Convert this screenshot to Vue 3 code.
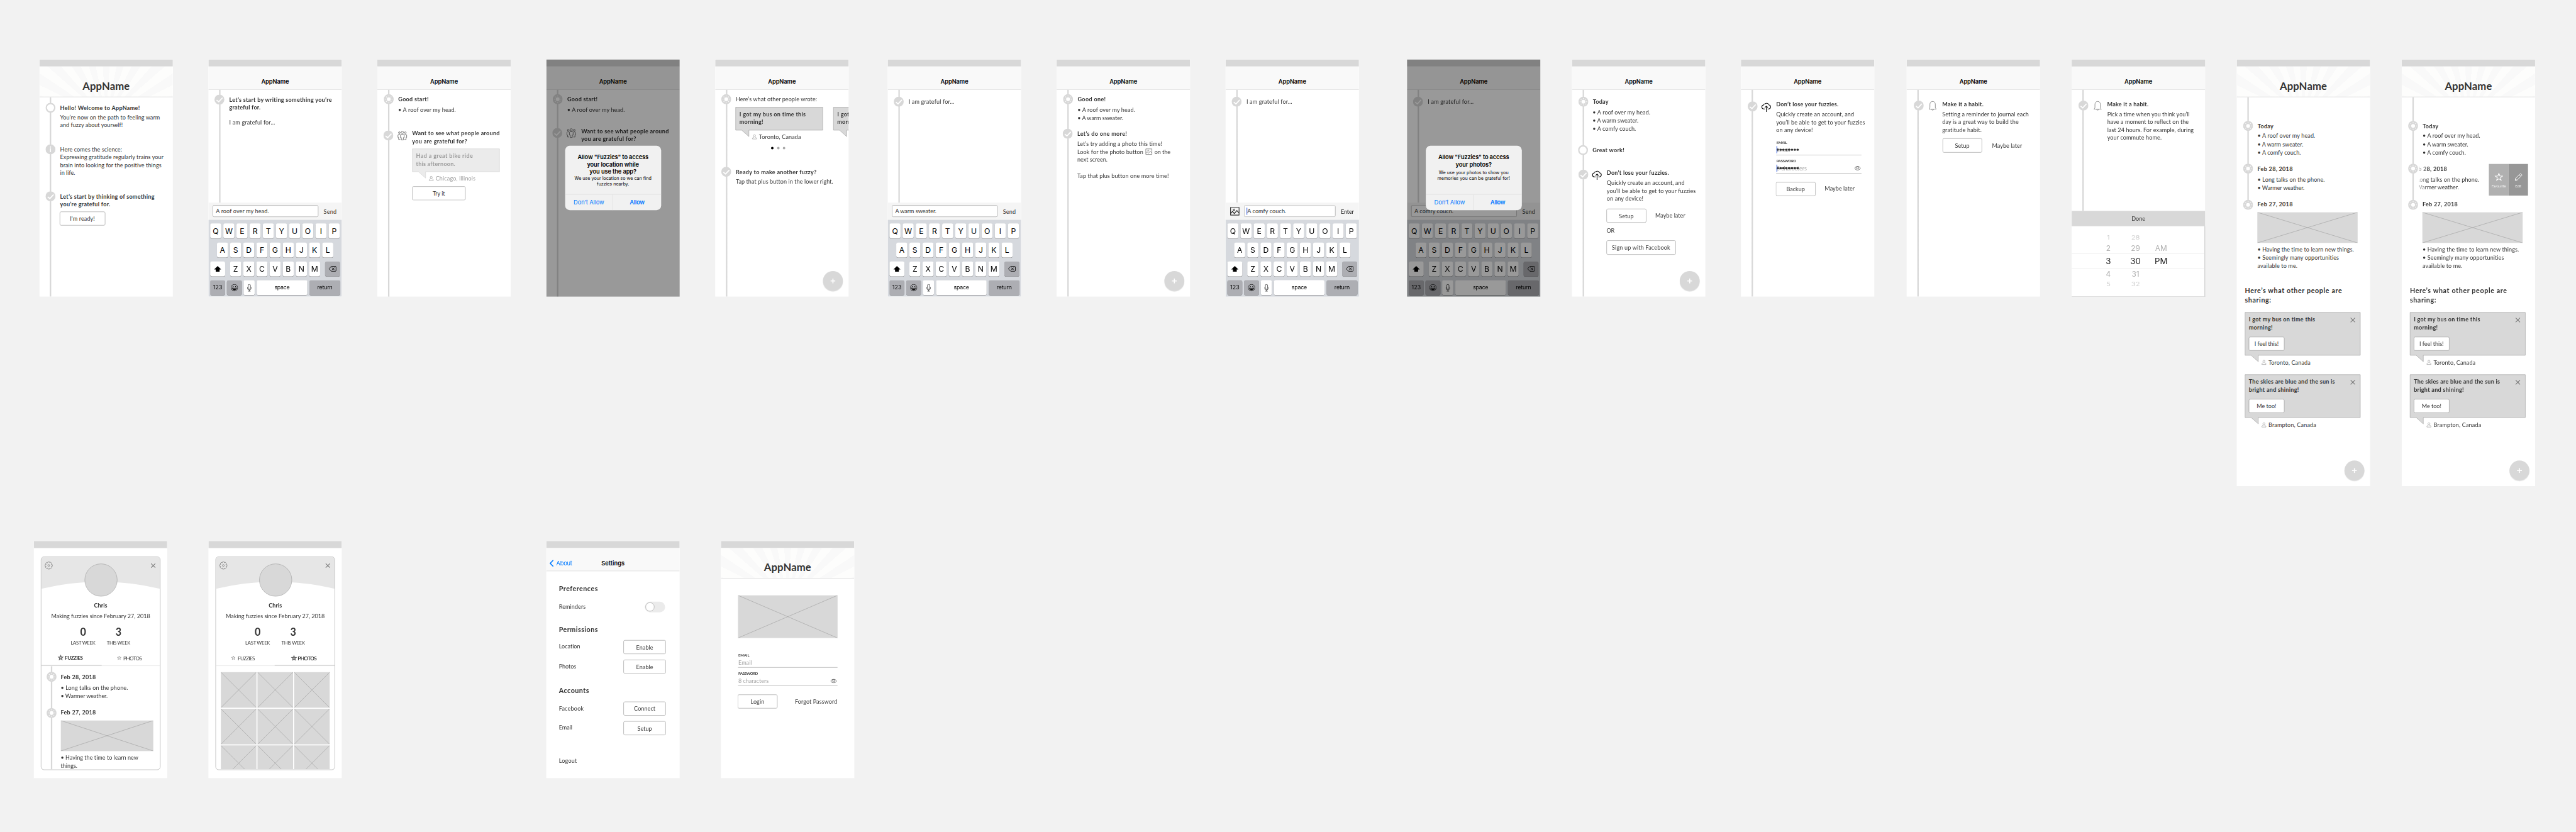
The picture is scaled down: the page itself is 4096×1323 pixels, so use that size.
<script setup>
const SCALE = 4096 / 7243

/* Spreads a line's letters so that it takes its nominal width. */
const vFit = {
  mounted(el, { value }) {
    if (!value) return
    const n = el.textContent.length
    if (n < 2) return
    const natural = el.getBoundingClientRect().width / SCALE
    el.style.letterSpacing = ((value - natural) / (n - 1)).toFixed(3) + 'px'
  },
}

/* ---- icons: each one is a viewBox and a list of paths ---- */
const ln = (d, w = 1.5, o = {}) => ({ d, fill: 'none', stroke: 'currentColor', 'stroke-width': w, ...o })
const fl = (d, o = {}) => ({ d, fill: 'currentColor', ...o })
const circ = (x, y, r) => `M${x - r} ${y}a${r} ${r} 0 1 0 ${2 * r} 0a${r} ${r} 0 1 0 ${-2 * r} 0z`
const rays = Array.from({ length: 8 }, (_, i) => {
  const a = (i * Math.PI) / 4
  const p = (r) => `${(14 + r * Math.cos(a)).toFixed(2)} ${(14 + r * Math.sin(a)).toFixed(2)}`
  return `M${p(8)}L${p(10.3)}`
}).join('')
const gear = (() => {
  let d = ''
  for (let i = 0; i < 8; i++) {
    const b = (i * Math.PI) / 4
    const p = (r, o) => `${(11 + r * Math.cos(b + o)).toFixed(2)} ${(11 + r * Math.sin(b + o)).toFixed(2)}`
    d += `${i ? 'L' : 'M'}${p(8, -0.36)}L${p(10.4, -0.22)}L${p(10.4, 0.22)}L${p(8, 0.36)}`
  }
  return d + 'z'
})()
const starPath = (c, R, r) => {
  let d = ''
  for (let i = 0; i < 10; i++) {
    const a = -Math.PI / 2 + (i * Math.PI) / 5
    const q = i % 2 ? r : R
    d += `${i ? 'L' : 'M'}${(c + q * Math.cos(a)).toFixed(2)} ${(c + q * Math.sin(a)).toFixed(2)}`
  }
  return d + 'z'
}
const G = '#d8d8d8'
const disc = { d: circ(14, 14, 14), fill: G }
const icons = {
  check: { vb: '0 0 28 28', p: [disc, ln('M6 15.3L12 20.3L22.6 9', 3, { stroke: '#fff' })] },
  ring: { vb: '0 0 28 28', p: [disc, { d: circ(14, 14, 10), fill: '#fff' }] },
  info: { vb: '0 0 28 28', p: [disc, { d: circ(14, 7.4, 1.7) + 'M12.7 10.8h2.6v11h-2.6z', fill: '#fff' }] },
  sun: { vb: '0 0 28 28', p: [disc, { d: circ(14, 14, 5.4), fill: '#fff' }, ln(rays, 1.8, { stroke: '#fff' })] },
  people: {
    vb: '0 0 26 26',
    p: [
      ln(circ(13, 4, 3.1) + circ(4.8, 5, 2.4) + circ(21.2, 5, 2.4), 1.7),
      ln('M9.4 9.2h7.2l1.5 1.3v8h-2.3v6.6h-5.6v-6.6H7.9v-8z', 1.7),
      ln('M6.5 9.7H2.6L1 11.2v7h1.7v5.5h4.5M19.5 9.7h3.9L25 11.2v7h-1.7v5.5h-4.5', 1.7),
    ],
  },
  cloud: {
    vb: '0 0 28 28',
    p: [
      ln('M10.2 18.4H7a5.6 5.6 0 0 1-.8-11.1 3.3 3.3 0 0 1 3.9-3A6.4 6.4 0 0 1 20.8 7a5.8 5.8 0 0 1 0 11.4h-3.2', 1.9),
      ln('M14 26.8V11M9.8 14.6L14 10.3l4.2 4.3', 1.9),
    ],
  },
  bell: {
    vb: '0 0 24 26',
    p: [ln('M1.5 22.3h21c-2.6-1.8-2.9-3-2.9-6V9.5C19.6 4.3 16.4 1.2 12 1.2S4.4 4.3 4.4 9.5v6.8c0 3-.3 4.2-2.9 6zM8.6 22.5c.5 1.8 1.8 2.6 3.4 2.6s2.9-.8 3.4-2.6', 1.6)],
  },
  person: { vb: '0 0 13 13', p: [ln(circ(6.5, 3.6, 2.9), 1), ln('M5 7.6C2.5 8 .7 9 .7 11v1.4h11.6V11c0-2-1.8-3-4.3-3.4', 1)] },
  photo: { vb: '0 0 26 24', p: [ln('M1 1h24v22H1z', 2), ln(circ(10.6, 7.8, 2.2), 1.7), ln('M1.5 18l5-5.5 4.8 6 7.5-8.5 6 7', 1.9)] },
  eye: { vb: '0 0 18 12', p: [ln('M.8 6C3 2.6 5.8.8 9 .8S15 2.6 17.2 6C15 9.4 12.2 11.2 9 11.2S3 9.4.8 6z', 1.1), ln(circ(9, 5, 3), 1.1)] },
  close: { vb: '0 0 14 14', p: [ln('M.8.8l12.4 12.4M13.2.8L.8 13.2', 1.9)] },
  gear: { vb: '0 0 22 22', p: [ln(gear, 1.3, { 'stroke-linejoin': 'round' }), ln(circ(11, 11, 2.6), 1.3)] },
  star: { vb: '0 0 24 24', p: [ln(starPath(12.2, 10.8, 4.6), 1.8)] },
  starBold: { vb: '0 0 24 24', p: [ln(starPath(12.2, 9.6, 4.3), 4)] },
  pencil: { vb: '0 0 24 24', p: [ln('M3 21.5l1.2-6L16.5 3.2a2.3 2.3 0 0 1 3.3 0l1.3 1.3a2.3 2.3 0 0 1 0 3.3L8.5 20.2z', 1.7), ln('M14.5 5.5l4.5 4.5M4 17l3.5 3.6', 1.7)] },
  shift: { vb: '0 0 20 17', p: [fl('M10 0l10 9.8h-4.6V16H4.6V9.8H0z')] },
  back: { vb: '0 0 23 17', p: [ln('M8 .9h11.6a2.4 2.4 0 0 1 2.4 2.4v10a2.4 2.4 0 0 1-2.4 2.4H8L1 8.3z', 1.6, { 'stroke-linejoin': 'round' }), ln('M10 4.8l7 7M17 4.8l-7 7', 1.8)] },
  emoji: {
    vb: '0 0 20 20',
    p: [ln(circ(10, 10, 9.3), 1.2), fl(circ(6.6, 6.9, 1.3) + circ(13.4, 6.9, 1.3)), ln('M3.5 10.6c.6 4 3.2 5.9 6.5 5.9s5.9-1.9 6.5-5.9c-4 1.3-9 1.3-13 0z', 1.2), fl('M4.5 12.8c3.5 1 7.5 1 11 0-1 2.7-3 3.7-5.5 3.7s-4.5-1-5.5-3.7z')],
  },
  mic: { vb: '0 0 12 21', p: [ln('M6 .6a3.2 3.2 0 0 1 3.2 3.2v7.4a3.2 3.2 0 0 1-6.4 0V3.8A3.2 3.2 0 0 1 6 .6z', 1.1), ln('M.7 8v3.2c0 3.2 2.3 5.1 5.3 5.1s5.3-1.9 5.3-5.1V8M6 16.3v3.6M2.5 20h7', 1.1)] },
  chevron: { vb: '0 0 12 20', p: [ln('M10.6 1.2L2 10l8.6 8.8', 2.8)] },
}

/* ---- content items; x and y are in points of the phone ---- */
const t = (x, c, lines, o = {}) => {
  const lh = o.lh || 22
  const l = []
  for (let i = 0; i < lines.length; i += 2) l.push({ s: lines[i], w: lines[i + 1] })
  const w = o.w || Math.max(...l.map((v) => v.w))
  return { k: 'text', x, y: c - lh / 2, w, h: lh * l.length, lh, lines: l, cls: o.cls || '' }
}
const b = (x, c, lines, o = {}) => t(x, c, lines, { ...o, cls: 'bold ' + (o.cls || '') })
const ic = (name, x, y, w, h, color = '#333') => ({ k: 'icon', name, x, y, w, h, color })
const btn = (x, y, w, s, sw, h = 39) => ({ k: 'btn', x, y, w, h, s, sw })
const img = (x, y, w, h) => ({ k: 'img', x, y, w, h })
const bar = (x, y, w, h, color) => ({ k: 'bar', x, y, w, h, color })
const bubble = (x, y, w, h, lines, o = {}) => ({ k: 'bubble', x, y, w, h, lines, ...o })
const field = (x, y, w, label, lw, ph, pw, o = {}) => ({ k: 'field', x, y, w, h: 42, label, lw, ph, pw, ...o })
const r = (...kids) => kids

const section = (y0, x0, h, rail, rows) => {
  let cur = y0
  const out = rows.map((kids) => {
    const y = Math.min(...kids.map((k) => k.y))
    const row = { mt: y - cur, kids: [] }
    let cx = x0 + (rail ? rail.w : 0)
    for (const k of kids) {
      row.kids.push({ ...k, ml: k.x - cx, dy: k.y - y })
      cx = k.x + k.w
    }
    row.h = Math.max(...kids.map((k) => k.y - y + k.h))
    cur = y + row.h
    return row
  })
  let rl = null
  if (rail) {
    let ry = y0
    rl = { ...rail, badges: rail.badges.map(([name, x, c]) => {
      const v = { name, ml: x - x0, mt: c - 14 - ry }
      ry = c + 14
      return v
    }) }
  }
  return { h, rail: rl, rows: out }
}
const rail = (line, badges, o = {}) => ({ w: 48, line, badges, len: '100%', ...o })

const ROOF = ['• A roof over my head.', 162]
const SWEATER = ['• A warm sweater.', 128.6]
const COUCH = ['• A comfy couch.', 121.7]
const LOSE = ['Quickly create an account, and', 219, 'you’ll be able to get to your fuzzies', 250, 'on any device!', 103]
const place = (x, c, s, w, color) => r(ic('person', x, c - 7, 13, 13.5, '#8a8a8a'), t(x + 19.3, c, [s, w], { cls: color || '' }))
const asking = (dy, dx) => [
  r(b(59, 111.6, ['Good start!', 85])),
  r(t(58.5, 140.8, ROOF)),
  r(ic('people', 56.5 + dx, 201 + dy, 26.5, 26.5, '#777'), b(97.8 + dx, 207.6 + dy, ['Want to see what people around', 246, 'you are grateful for?', 154.4])),
]
const grateful = [r(t(58.6, 118.5, ['I am grateful for…', 128.6]))]
const shared = () => section(612, 0, 588, null, [
  r(b(23, 649.5, ['Here’s what other people are', 272.6, 'sharing:', 73.5], { cls: 'h2', lh: 27 })),
  r(bubble(23, 711.3, 325, 121.5, [['I got my bus on time this', 186.5], ['morning!', 67]], { close: true, btn: ['I feel this!', 68] })),
  place(70, 852.5, 'Toronto, Canada', 118),
  r(bubble(23, 886.3, 325, 121.5, [['The skies are blue and the sun is', 242], ['bright and shining!', 140.6]], { close: true, btn: ['Me too!', 55] })),
  place(70, 1027.6, 'Brampton, Canada', 134),
])
const diary = (swiped) => section(106, 0, 506, rail(30, [['sun', 18, 187], ['sun', 18, 307], ['sun', 18, 409]], { len: '303px' }), [
  r(b(59, 186.6, ['Today', 44])),
  r(t(58.5, 215.5, ROOF)),
  r(t(58.5, 238.6, SWEATER)),
  r(t(58.5, 261.6, COUCH)),
  ...(swiped
    ? [r({ k: 'swipe', x: 48, y: 294, w: 307, h: 89 })]
    : [
        r(b(58.5, 307.6, ['Feb 28, 2018', 98.7])),
        r(t(58.5, 337.7, ['• Long talks on the phone.', 189])),
        r(t(58.5, 360.6, ['• Warmer weather.', 132])),
      ]),
  r(b(58.5, 407.4, ['Feb 27, 2018', 98.7])),
  r(img(58, 430, 282, 86)),
  r(t(58.5, 534.6, ['• Having the time to learn new things.', 271])),
  r(t(58.5, 557.8, ['• Seemingly many opportunities', 229, 'available to me.', 112])),
])
const profileTop = (first) => [
  r(ic('gear', 30, 58, 22, 22, '#777'), { k: 'avatar', x: 142.5, y: 64, w: 91.5, h: 91.5 }, ic('close', 328.5, 62.5, 13.5, 13, '#777')),
  r(b(169, 180.6, ['Chris', 37])),
  r(t(48.5, 211.2, ['Making fuzzies since February 27, 2018', 278])),
  r(b(129.8, 255.6, ['0', 0], { cls: 'stat', lh: 30, w: 16 }), b(229.4, 255.6, ['3', 0], { cls: 'stat', lh: 30, w: 16 })),
  r(t(103.3, 286, ['LAST WEEK', 69.5], { cls: 'cap' }), t(204.8, 286, ['THIS WEEK', 66.3], { cls: 'cap' })),
  first
    ? r(ic('starBold', 67, 321.5, 15, 15, '#666'), b(86.8, 329.2, ['FUZZIES', 51], { cls: 'tab' }), ic('star', 233.5, 323.5, 12, 12, '#666'), t(251, 330.3, ['PHOTOS', 53], { cls: 'tab' }))
    : r(ic('star', 63, 323.5, 12, 12, '#666'), t(82, 330, ['FUZZIES', 48.5], { cls: 'tab' }), ic('starBold', 232, 322, 15, 15, '#666'), b(250.3, 330.2, ['PHOTOS', 54], { cls: 'tab' })),
  first ? r(bar(20, 348.6, 170, 3, G), bar(190, 350.6, 165, 1, '#ccc')) : r(bar(20, 350.6, 165, 1, '#ccc'), bar(185, 348.6, 170, 3, G)),
]

const phones = [
  {
    x: 111, hero: true,
    sections: [section(106, 0, 561, rail(29, [['ring', 17, 136], ['info', 17, 252.8], ['check', 17, 385]]), [
      r(b(58, 135.7, ['Hello! Welcome to AppName!', 224])),
      r(t(58, 163, ['You’re now on the path to feeling warm', 280.6, 'and fuzzy about yourself!', 176])),
      r(t(58, 252.8, ['Here comes the science:', 174, 'Expressing gratitude regularly trains your', 291, 'brain into looking for the positive things', 285, 'in life.', 42])),
      r(b(58, 384.8, ['Let’s start by thinking of something', 265, 'you’re grateful for.', 140.6])),
      r(btn(57, 428.3, 127.5, "I'm ready!", 70)),
    ])],
  },
  {
    x: 586, nav: 'AppName', keyboard: true, compose: ['A roof over my head.', 149, 'Send', 36],
    sections: [section(85, 0, 318, rail(30, [['check', 17, 113]]), [
      r(b(58.5, 113, ['Let’s start by writing something you’re', 288.7, 'grateful for.', 88])),
      r(t(58.6, 176.8, ['I am grateful for…', 128.6])),
    ])],
  },
  {
    x: 1061, nav: 'AppName',
    sections: [section(85, 0, 582, rail(30, [['sun', 18, 112], ['check', 17, 214]]), [
      ...asking(0, 0),
      r(bubble(97.8, 251.3, 246, 65.3, [['Had a great bike ride', 159.6], ['this afternoon.', 109.6]], { faded: true })),
      place(144.6, 334.8, 'Chicago, Illinois', 112, 'faded'),
      r(btn(97.6, 356.7, 150.5, 'Try it', 34.4)),
    ])],
  },
  {
    x: 1536, nav: 'AppName',
    dialog: { title: [['Allow "Fuzzies" to access', 199], ['your location while', 146], ['you use the app?', 132]], sub: [['We use your location so we can find', 216.4], ['fuzzies nearby.', 90.7]], gap: 2 },
    sections: [section(85, 0, 582, rail(30, [['sun', 18, 112], ['check', 17, 207]]), asking(-6.7, 0.4))],
  },
  {
    x: 2011, nav: 'AppName', fab: 302.5,
    sections: [section(85, 0, 582, rail(30, [['sun', 17, 112], ['check', 17, 316]]), [
      r(t(58, 111.7, ['Here’s what other people wrote:', 228])),
      r(
        bubble(57, 134.4, 246, 65.5, [['I got my bus on time this', 186.5], ['morning!', 67]]),
        bubble(332, 134.4, 246, 65.5, [['I got my bus on time this', 186.5], ['morning!', 67]]),
      ),
      place(103.7, 217.8, 'Toronto, Canada', 118),
      r({ k: 'dots', x: 157.4, y: 246, w: 40, h: 7 }),
      r(b(58, 315.6, ['Ready to make another fuzzy?', 226.7])),
      r(t(58, 343, ['Tap that plus button in the lower right.', 273])),
    ])],
  },
  {
    x: 2496, nav: 'AppName', keyboard: true, compose: ['A warm sweater.', 116, 'Send', 36],
    sections: [section(85, 0, 318, rail(30, [['check', 17, 119]]), grateful)],
  },
  {
    x: 2971, nav: 'AppName', fab: 302.5,
    sections: [section(85, 0, 582, rail(30, [['sun', 18, 112], ['check', 17, 209]]), [
      r(b(59, 111.7, ['Good one!', 79])),
      r(t(58.5, 140.8, ROOF)),
      r(t(58.5, 163.8, SWEATER)),
      r(b(58, 208.6, ['Let’s do one more!', 139.5])),
      r(t(58, 236.8, ['Let’s try adding a photo this time!', 239])),
      r(t(58, 259.8, ['Look for the photo button', 185]), ic('photo', 249.5, 251.5, 18.5, 17, '#777'), t(275, 259.8, ['on the', 45])),
      r(t(58, 282, ['next screen.', 85])),
      r(t(58, 327.7, ['Tap that plus button one more time!', 257])),
    ])],
  },
  {
    x: 3446, nav: 'AppName', keyboard: true, compose: ['A comfy couch.', 109.5, 'Enter', 37], photo: true,
    sections: [section(85, 0, 318, rail(30, [['check', 17, 119]]), grateful)],
  },
  {
    x: 3956, nav: 'AppName', keyboard: true, compose: ['A comfy couch.', 109.5, 'Send', 36],
    dialog: { title: [['Allow "Fuzzies" to access', 199], ['your photos?', 101.6]], sub: [['We use your photos to show you', 196], ['memories you can be grateful for!', 204]], gap: 6.5 },
    sections: [section(85, 0, 318, rail(30, [['check', 17, 119]]), grateful)],
  },
  {
    x: 4420, nav: 'AppName', fab: 303,
    sections: [section(85, 0, 582, rail(30, [['sun', 18, 119], ['ring', 17, 255], ['check', 18, 324]]), [
      r(b(58.5, 118.7, ['Today', 44])),
      r(t(58, 148, ROOF)),
      r(t(58, 170.8, SWEATER)),
      r(t(58, 193.8, COUCH)),
      r(b(58, 255, ['Great work!', 89])),
      r(ic('cloud', 55.7, 312.5, 29, 28, '#111'), b(97.7, 318.3, ['Don’t lose your fuzzies.', 175])),
      r(t(97.7, 347.2, LOSE)),
      r(btn(97, 419.6, 111.5, 'Setup', 41), t(234, 438.3, ['Maybe later', 84.5])),
      r(t(97, 482, ['OR', 22.5])),
      r(btn(97, 509, 194.5, 'Sign up with Facebook', 163.6, 40)),
    ])],
  },
  {
    x: 4895, nav: 'AppName',
    sections: [section(85, 0, 582, rail(30, [['check', 19, 132]]), [
      r(ic('cloud', 56.7, 120.5, 29, 28, '#111'), b(99, 126, ['Don’t lose your fuzzies.', 175])),
      r(t(99, 155, LOSE)),
      r(field(99, 226.5, 240, 'EMAIL', 30, 'Email', 38, { typed: true })),
      r(field(99, 278.5, 240, 'PASSWORD', 55.5, '8 characters', 85, { typed: true, eye: true })),
      r(btn(98, 344.6, 111.5, 'Backup', 52), t(235.5, 363.2, ['Maybe later', 84.5])),
    ])],
  },
  {
    x: 5361, nav: 'AppName',
    sections: [section(85, 0, 582, rail(30, [['check', 19.5, 130]]), [
      r(ic('bell', 61, 117, 24, 26.5, '#888'), b(100, 126, ['Make it a habit.', 116])),
      r(t(100, 153.7, ['Setting a reminder to journal each', 243, 'day is a great way to build the', 214.7, 'gratitude habit.', 111])),
      r(btn(100.5, 222.2, 111.5, 'Setup', 41, 40), t(240, 242.3, ['Maybe later', 84.5])),
    ])],
  },
  {
    x: 5825, nav: 'AppName', picker: true,
    sections: [section(85, 0, 341, rail(30, [['check', 19.2, 130]]), [
      r(ic('bell', 61, 117, 24, 26.5, '#888'), b(99.7, 126, ['Make it a habit.', 116])),
      r(t(100, 153.7, ['Pick a time when you think you’ll', 232, 'have a moment to reflect on the', 229, 'last 24 hours. For example, during', 243, 'your commute home.', 152.7])),
    ])],
  },
  { x: 6289, hero: true, h: 1200, fab: 303, sections: [diary(false), shared()] },
  { x: 6753, hero: true, h: 1200, fab: 303, sections: [diary(true), shared()] },
  {
    x: 95, y: 1521, card: true,
    sections: [
      section(45, 20, 307, null, profileTop(true)),
      section(352, 20, 291, { w: 48, line: 27, len: '100%', badges: [['sun', 35, 382], ['sun', 35, 483.5]] }, [
        r(b(75, 382.2, ['Feb 28, 2018', 98.7])),
        r(t(75, 412.3, ['• Long talks on the phone.', 189])),
        r(t(75, 435.6, ['• Warmer weather.', 132])),
        r(b(75, 482.3, ['Feb 27, 2018', 98.7])),
        r(img(75, 505, 260, 85.6)),
        r(t(75, 609.6, ['• Having the time to learn new', 218.7, 'things.', 47])),
      ]),
    ],
  },
  {
    x: 586, y: 1521, card: true,
    sections: [
      section(45, 20, 307, null, profileTop(false)),
      section(352, 20, 290, null, [0, 1, 2].map((i) => r(...[0, 1, 2].map((j) => img(34 + 103 * j, 368.7 + 103 * i, 100, 100))))),
    ],
  },
  {
    x: 1536, y: 1521, nav: 'Settings', back: true,
    sections: [section(85, 0, 582, null, [
      r(b(35.6, 135, ['Preferences', 109], { cls: 'h2' })),
      r(t(35.6, 184.6, ['Reminders', 75]), { k: 'toggle', x: 277, y: 170.5, w: 57, h: 30 }),
      r(b(35.6, 250.3, ['Permissions', 109], { cls: 'h2' })),
      r(t(35.6, 297.5, ['Location', 60]), btn(217, 279.5, 119.5, 'Enable', 48)),
      r(t(35.6, 353, ['Photos', 48.5]), btn(217, 334, 119.5, 'Enable', 48)),
      r(b(35.6, 420.8, ['Accounts', 84.4], { cls: 'h2' })),
      r(t(35.6, 472.3, ['Facebook', 69.5]), btn(217, 452.3, 119.5, 'Connect', 60)),
      r(t(35.6, 525.2, ['Email', 37.5]), btn(217, 507.2, 119.5, 'Setup', 41)),
      r(t(35.6, 618.3, ['Logout', 50.5])),
    ])],
  },
  {
    x: 2027, y: 1521, hero: true,
    sections: [section(106, 0, 561, null, [
      r(img(48, 152.7, 280, 120)),
      r(field(48, 314.5, 280, 'EMAIL', 31, 'Email', 38)),
      r(field(48, 366.5, 280, 'PASSWORD', 55.5, '8 characters', 85, { eye: true })),
      r(btn(47, 432.2, 111.5, 'Login', 38.5), t(208, 451.4, ['Forgot Password', 119])),
    ])],
  },
]

const keyRows = ['QWERTYUOIP', 'ASDFGHJKL', 'ZXCVBNM'].map((s) => [...s])
const picker = [
  ['1', '28', '', 'far', 28], ['2', '29', 'AM', 'near', 31.4], ['3', '30', 'PM', 'now', 42],
  ['4', '31', '', 'near', 31.4], ['5', '32', '', 'far', 28],
]
const bubblePath = (w, h) => `M.5 .5H${w - 0.5}V${h - 0.5}H37.7V${h + 17.5}L17.5 ${h - 0.5}H.5Z`
const px = (v) => v + 'px'
</script>

<template>
  <div class="viewport">
    <div class="canvas" :style="{ transform: `scale(${SCALE})` }">
      <article v-for="(p, pi) in phones" :key="pi" class="phone" :style="{ left: px(p.x), top: px(p.y || 167), height: px(p.h || 667) }">
        <div class="status"></div>
        <header v-if="p.hero" class="hero"><span v-fit="132.6">AppName</span></header>
        <header v-else-if="p.nav" class="nav">
          <span v-if="p.back" class="nav-back">
            <svg :viewBox="icons.chevron.vb" width="12" height="20"><path v-for="(a, i) in icons.chevron.p" :key="i" v-bind="a" /></svg>
            <span v-fit="45">About</span>
          </span>
          <span class="nav-title" v-fit="p.back ? 65.4 : 78">{{ p.nav }}</span>
        </header>

        <div :class="p.card ? 'card' : 'plain'">
          <svg v-if="p.card" class="card-band" viewBox="0 0 334 90"><path d="M0 0H334V89.5Q167 49.5 0 89.5Z" fill="#e6e6e6" /></svg>
          <section v-for="(s, si) in p.sections" :key="si" class="section" :style="{ height: px(s.h) }">
            <div v-if="s.rail" class="rail" :style="{ width: px(s.rail.w), backgroundPosition: s.rail.line + 'px 0', backgroundSize: '4px ' + s.rail.len }">
              <svg v-for="(g, gi) in s.rail.badges" :key="gi" class="badge" viewBox="0 0 28 28" :style="{ marginLeft: px(g.ml), marginTop: px(g.mt) }">
                <path v-for="(a, i) in icons[g.name].p" :key="i" v-bind="a" />
              </svg>
            </div>
            <div class="rows">
              <div v-for="(row, ri) in s.rows" :key="ri" class="row" :style="{ marginTop: px(row.mt), height: px(row.h) }">
                <div v-for="(k, ki) in row.kids" :key="ki" class="kid" :style="{ marginLeft: px(k.ml), marginTop: px(k.dy), width: px(k.w), height: px(k.h) }">
                  <p v-if="k.k === 'text'" class="text" :class="k.cls" :style="{ lineHeight: px(k.lh) }">
                    <span v-for="(l, li) in k.lines" :key="li" class="line"><span class="fit" v-fit="l.w">{{ l.s }}</span></span>
                  </p>
                  <svg v-else-if="k.k === 'icon'" class="icon" preserveAspectRatio="none" :viewBox="icons[k.name].vb" :style="{ color: k.color }">
                    <path v-for="(a, i) in icons[k.name].p" :key="i" v-bind="a" />
                  </svg>
                  <div v-else-if="k.k === 'btn'" class="btn"><span v-fit="k.sw">{{ k.s }}</span></div>
                  <svg v-else-if="k.k === 'img'" class="img" :viewBox="`0 0 ${k.w} ${k.h}`">
                    <path :d="`M0 0L${k.w} ${k.h}M${k.w} 0L0 ${k.h}`" stroke="#979797" />
                  </svg>
                  <div v-else-if="k.k === 'bar'" class="fill" :style="{ background: k.color }"></div>
                  <div v-else-if="k.k === 'bubble'" class="bubble" :class="{ dim: k.faded }">
                    <svg class="bubble-shape" :viewBox="`0 0 ${k.w} ${k.h}`"><path :d="bubblePath(k.w, k.h)" fill="#d8d8d8" stroke="#979797" /></svg>
                    <div class="bubble-body">
                      <p class="text bold">
                        <span v-for="(l, li) in k.lines" :key="li" class="line"><span class="fit" v-fit="l[1]">{{ l[0] }}</span></span>
                      </p>
                      <div v-if="k.btn" class="btn bubble-btn"><span v-fit="k.btn[1]">{{ k.btn[0] }}</span></div>
                    </div>
                    <svg v-if="k.close" class="bubble-close" viewBox="0 0 14 14"><path v-for="(a, i) in icons.close.p" :key="i" v-bind="a" /></svg>
                  </div>
                  <div v-else-if="k.k === 'dots'" class="dots"><i></i><i></i><i></i></div>
                  <div v-else-if="k.k === 'field'" class="field">
                    <div class="label"><span class="fit" v-fit="k.lw">{{ k.label }}</span></div>
                    <div class="input">
                      <span class="fit ph" v-fit="k.pw">{{ k.ph }}</span>
                      <svg v-if="k.eye" class="eye" viewBox="0 0 18 12"><path v-for="(a, i) in icons.eye.p" :key="i" v-bind="a" /></svg>
                      <span v-if="k.typed" class="typed"><i v-for="n in 8" :key="n"></i></span>
                      <span v-if="k.typed" class="caret"></span>
                    </div>
                  </div>
                  <div v-else-if="k.k === 'avatar'" class="avatar"></div>
                  <div v-else-if="k.k === 'toggle'" class="toggle"><i></i></div>
                  <div v-else-if="k.k === 'swipe'" class="swipe">
                    <div class="swipe-text">
                      <p class="text bold"><span class="line"><span class="fit" v-fit="98.7">Feb 28, 2018</span></span></p>
                      <p class="text second"><span class="line"><span class="fit" v-fit="189">• Long talks on the phone.</span></span></p>
                      <p class="text"><span class="line"><span class="fit" v-fit="132">• Warmer weather.</span></span></p>
                    </div>
                    <div class="action fav">
                      <svg viewBox="0 0 24 24"><path v-for="(a, i) in icons.star.p" :key="i" v-bind="a" /></svg>
                      <span v-fit="40.5">Favourite</span>
                    </div>
                    <div class="action edit">
                      <svg viewBox="0 0 24 24"><path v-for="(a, i) in icons.pencil.p" :key="i" v-bind="a" /></svg>
                      <span v-fit="17.5">Edit</span>
                    </div>
                  </div>
                </div>
              </div>
            </div>
          </section>
        </div>

        <div v-if="p.compose" class="compose">
          <svg v-if="p.photo" class="compose-photo" viewBox="0 0 26 24"><path v-for="(a, i) in icons.photo.p" :key="i" v-bind="a" /></svg>
          <div class="compose-input" :class="{ focused: p.photo }"><span class="fit" v-fit="p.compose[1]">{{ p.compose[0] }}</span></div>
          <div class="compose-send" :class="{ strong: p.photo }"><span class="fit" v-fit="p.compose[3]">{{ p.compose[2] }}</span></div>
        </div>

        <div v-if="p.keyboard" class="keyboard">
          <div class="keys"><span v-for="c in keyRows[0]" :key="c" class="key">{{ c }}</span></div>
          <div class="keys second-row"><span v-for="c in keyRows[1]" :key="c" class="key">{{ c }}</span></div>
          <div class="keys third-row">
            <span class="key wide"><svg viewBox="0 0 20 17" width="20" height="17"><path v-for="(a, i) in icons.shift.p" :key="i" v-bind="a" /></svg></span>
            <span class="keys letters"><span v-for="c in keyRows[2]" :key="c" class="key">{{ c }}</span></span>
            <span class="key wide dark"><svg viewBox="0 0 23 17" width="22" height="16"><path v-for="(a, i) in icons.back.p" :key="i" v-bind="a" /></svg></span>
          </div>
          <div class="keys fourth-row">
            <span class="key wide dark small"><span v-fit="26">123</span></span>
            <span class="key wide dark"><svg viewBox="0 0 20 20" width="20" height="20"><path v-for="(a, i) in icons.emoji.p" :key="i" v-bind="a" /></svg></span>
            <span class="key mic"><svg viewBox="0 0 12 21" width="12" height="21"><path v-for="(a, i) in icons.mic.p" :key="i" v-bind="a" /></svg></span>
            <span class="key space small"><span v-fit="43">space</span></span>
            <span class="key return dark small"><span v-fit="43">return</span></span>
          </div>
        </div>

        <template v-if="p.picker">
          <div class="done"><span v-fit="38.7">Done</span></div>
          <div class="picker">
            <div v-for="(w, wi) in picker" :key="wi" class="wheel" :class="w[3]" :style="{ height: px(w[4]) }">
              <span>{{ w[0] }}</span><span>{{ w[1] }}</span><span>{{ w[2] }}</span>
            </div>
          </div>
        </template>

        <div v-if="p.fab" class="fab" :style="{ left: px(p.fab) }">
          <svg viewBox="0 0 14 14" width="14" height="14"><path d="M7 0V14M0 7H14" stroke="#fff" stroke-width="2.8" /></svg>
        </div>

        <div v-if="p.dialog" class="overlay">
          <div class="dialog">
            <div class="dialog-body">
              <p class="dialog-title"><span v-for="l in p.dialog.title" :key="l[0]" class="line"><span class="fit" v-fit="l[1]">{{ l[0] }}</span></span></p>
              <p class="dialog-sub" :style="{ marginTop: px(p.dialog.gap) }"><span v-for="l in p.dialog.sub" :key="l[0]" class="line"><span class="fit" v-fit="l[1]">{{ l[0] }}</span></span></p>
            </div>
            <div class="dialog-actions">
              <div><span v-fit="86">Don’t Allow</span></div>
              <div class="primary"><span v-fit="42">Allow</span></div>
            </div>
          </div>
        </div>
      </article>
    </div>
  </div>
</template>

<style>
body {
  background: #f2f2f2;
}
</style>

<style scoped>
.viewport {
  width: 4096px;
  height: 1323px;
  overflow: hidden;
  background: #f2f2f2;
}
.canvas {
  position: relative;
  width: 7243px;
  height: 2340px;
  transform-origin: 0 0;
  font-family: Lato, 'Open Sans', sans-serif;
  font-size: 16px;
  color: #333;
}
.canvas p {
  margin: 0;
}
.phone {
  position: absolute;
  width: 375px;
  background: #fff;
  display: flex;
  flex-direction: column;
  overflow: hidden;
}
.status {
  flex: none;
  height: 20px;
  background: #d8d8d8;
}
.hero {
  flex: none;
  box-sizing: border-box;
  height: 86px;
  padding-top: 36.5px;
  border-bottom: 1px solid #ccc;
  text-align: center;
  font-size: 29.5px;
  line-height: 34px;
  font-weight: 700;
  background: repeating-conic-gradient(from -3.75deg at 50% 170%, #f9f9f9 0 7.5deg, #fdfdfc 7.5deg 15deg);
}
.hero span,
.nav-title,
.nav-back span,
.fit,
.btn span,
.done span,
.action span,
.dialog-actions span {
  display: inline-block;
  white-space: pre;
}
.nav {
  position: relative;
  flex: none;
  box-sizing: border-box;
  height: 65px;
  padding-top: 32px;
  border-bottom: 1px solid #d0d0d0;
  background: #f9f9f9;
  text-align: center;
  font: 600 16.4px/22px Inter, sans-serif;
  color: #000;
}
.nav-back {
  position: absolute;
  left: 9px;
  top: 32px;
  display: flex;
  align-items: center;
  gap: 7px;
  font-weight: 400;
  color: #007aff;
}
.plain {
  flex: none;
}
.card {
  position: relative;
  flex: none;
  box-sizing: border-box;
  width: 336px;
  height: 599.5px;
  margin: 24px 0 0 19.5px;
  border: 1px solid #979797;
  border-radius: 9px;
  overflow: hidden;
}
.card-band {
  position: absolute;
  left: 0;
  top: 0;
  width: 334px;
  height: 90px;
}
.section {
  position: relative;
  display: flex;
  overflow: hidden;
}
.rail {
  position: relative;
  z-index: 1;
  flex: none;
  background: linear-gradient(#d8d8d8, #d8d8d8) no-repeat;
}
.badge {
  display: block;
  width: 28px;
  height: 28px;
}
.rows {
  flex: 1;
  min-width: 0;
}
.row {
  display: flex;
  align-items: flex-start;
}
.kid {
  flex: none;
}
.line {
  display: block;
}
.text {
  white-space: nowrap;
  line-height: 22px;
}
.bold {
  font-weight: 700;
}
.faded {
  opacity: 0.5;
}
.h2 {
  font-size: 19px;
}
.stat {
  font-size: 28.5px;
  text-align: center;
}
.cap {
  font-size: 13.5px;
}
.tab {
  font-size: 14.5px;
}
.icon {
  display: block;
  width: 100%;
  height: 100%;
  overflow: visible;
}
.btn {
  box-sizing: border-box;
  width: 100%;
  height: 100%;
  display: flex;
  align-items: center;
  justify-content: center;
  border: 1px solid #8c8c8c;
  border-radius: 4px;
  background: #fff;
}
.img {
  display: block;
  width: 100%;
  height: 100%;
  background: #d8d8d8;
}
.fill {
  height: 100%;
}
.bubble {
  position: relative;
  height: 100%;
}
.dim {
  opacity: 0.5;
}
.bubble-shape {
  position: absolute;
  left: 0;
  top: 0;
  width: 100%;
  height: 100%;
  overflow: visible;
}
.bubble-body {
  position: relative;
  padding: 8.5px 0 0 11px;
}
.bubble-btn {
  width: 99.5px;
  height: 39px;
  margin-top: 16px;
}
.bubble-close {
  position: absolute;
  right: 14.5px;
  top: 14.5px;
  width: 15px;
  height: 14px;
  color: #777;
}
.dots {
  display: flex;
  gap: 9.2px;
}
.dots i {
  width: 7px;
  height: 7px;
  border-radius: 50%;
  background: #aaa;
}
.dots i:first-child {
  background: #000;
}
.label {
  height: 14px;
  padding-left: 1px;
  font-size: 10.5px;
  line-height: 14px;
  font-weight: 700;
}
.input {
  position: relative;
  display: flex;
  align-items: center;
  justify-content: space-between;
  height: 27px;
  padding: 0 2px 0 1px;
  border-bottom: 1px solid #979797;
}
.ph {
  color: #a4a4a4;
}
.eye {
  width: 18px;
  height: 12px;
  color: #222;
}
.typed {
  position: absolute;
  left: 1px;
  top: 10px;
  display: flex;
  gap: 1.5px;
}
.typed i {
  width: 6.5px;
  height: 6.5px;
  border-radius: 50%;
  background: #333;
}
.caret {
  position: absolute;
  left: 1px;
  top: 3px;
  width: 2px;
  height: 20px;
  background: #4169e1;
}
.avatar {
  box-sizing: border-box;
  height: 100%;
  border: 1px solid #979797;
  border-radius: 50%;
  background: #d8d8d8;
}
.toggle {
  box-sizing: border-box;
  height: 100%;
  padding: 2.5px;
  border-radius: 15px;
  background: #ebebeb;
}
.toggle i {
  display: block;
  box-sizing: border-box;
  width: 25px;
  height: 25px;
  border: 1px solid #979797;
  border-radius: 50%;
  background: #fff;
}
.swipe {
  display: flex;
  height: 100%;
}
.swipe-text {
  width: 197px;
  padding-top: 2.6px;
  box-sizing: border-box;
  overflow: hidden;
  text-indent: -19.5px;
  mask-image: linear-gradient(90deg, rgba(0, 0, 0, 0.25) 0, #000 26px);
}
.swipe-text .fit {
  text-indent: 0;
}
.swipe-text .second {
  margin-top: 8px;
}
.action {
  width: 55px;
  height: 89px;
  padding-top: 25px;
  box-sizing: border-box;
  color: #fff;
  font-size: 10.5px;
  line-height: 14px;
  text-align: center;
}
.action svg {
  display: block;
  width: 24px;
  height: 24px;
  margin: 0 auto 6px;
}
.action span {
  opacity: 0.85;
}
.fav {
  background: #b0b0b0;
}
.edit {
  background: #979797;
}
.compose {
  flex: none;
  box-sizing: border-box;
  height: 48px;
  padding: 7px 15px 8px 12px;
  display: flex;
  align-items: center;
  background: #f5f5f5;
}
.compose-photo {
  width: 26px;
  height: 24px;
  margin: 0 13px 0 1px;
  color: #111;
}
.compose-input {
  position: relative;
  flex: 1;
  box-sizing: border-box;
  height: 33px;
  padding: 0 8px;
  display: flex;
  align-items: center;
  border: 1px solid #8c8c8c;
  border-radius: 4px;
  background: #fff;
}
.focused::before {
  content: '';
  position: absolute;
  left: 6px;
  top: 6px;
  width: 2px;
  height: 20px;
  background: #4169e1;
}
.compose-send {
  width: 36px;
  margin-left: 15px;
  padding-top: 1px;
}
.strong {
  color: #111;
}
.keyboard {
  flex: none;
  box-sizing: border-box;
  height: 216px;
  padding: 10px 5px 0;
  background: #d6d9de;
  font: 400 21.6px/42px Inter, sans-serif;
  color: #000;
}
.keys {
  display: flex;
  gap: 6px;
  height: 42px;
}
.key {
  flex: none;
  width: 31px;
  height: 42px;
  border-radius: 5px;
  background: #fff;
  box-shadow: 0 1px 0 #898a8d;
  display: flex;
  align-items: center;
  justify-content: center;
}
.second-row {
  margin-top: 12px;
  padding-left: 19px;
}
.third-row {
  margin-top: 11px;
  gap: 14px;
}
.fourth-row {
  margin-top: 11px;
  gap: 5px;
}
.wide {
  width: 42px;
}
.mic {
  margin-right: 1px;
}
.space {
  width: 142px;
  margin-right: 1px;
}
.return {
  width: 87px;
}
.dark {
  background: #adaeb3;
}
.small {
  font-size: 15.6px;
}
.done {
  flex: none;
  height: 43px;
  line-height: 43px;
  text-align: center;
  background: #d8d8d8;
}
.picker {
  flex: 1;
  box-sizing: border-box;
  padding-top: 17.5px;
  border-right: 1px solid #999;
  border-bottom: 1px solid #ccc;
  font-family: Inter, sans-serif;
}
.wheel {
  box-sizing: border-box;
  display: grid;
  grid-template-columns: 76px 77px 67px;
  padding-left: 65px;
  align-items: center;
  text-align: center;
}
.now {
  border: solid #e4e4e4;
  border-width: 1px 0;
  font-size: 23.5px;
  color: #222;
}
.near {
  font-size: 21px;
  color: #b0b0b0;
}
.far {
  font-size: 20px;
  color: #cfcfcf;
}
.far span {
  transform: scaleY(0.75);
}
.fab {
  position: absolute;
  bottom: 16px;
  width: 56px;
  height: 56px;
  border-radius: 50%;
  background: #d8d8d8;
  box-shadow: 0 2px 2px rgba(0, 0, 0, 0.12);
  display: flex;
  align-items: center;
  justify-content: center;
}
.overlay {
  position: absolute;
  inset: 0;
  z-index: 2;
  background: rgba(0, 0, 0, 0.4);
  font-family: Inter, sans-serif;
}
.dialog {
  width: 270px;
  height: 180.5px;
  margin: 243px 0 0 52.5px;
  border-radius: 13px;
  background: #f1f1f1;
  color: #000;
  display: flex;
  flex-direction: column;
}
.dialog-body {
  flex: 1;
  padding-top: 21.5px;
  text-align: center;
}
.dialog-title {
  font-size: 16.3px;
  line-height: 20px;
  font-weight: 600;
}
.dialog-sub {
  font-size: 12.6px;
  line-height: 16px;
}
.dialog-actions {
  display: flex;
  height: 44px;
  border-top: 1px solid #d8d8d8;
  font-size: 16.4px;
  line-height: 44px;
  text-align: center;
  color: #007aff;
}
.dialog-actions div {
  flex: 1;
}
.dialog-actions .primary {
  border-left: 1px solid #d8d8d8;
  font-weight: 600;
}
</style>
